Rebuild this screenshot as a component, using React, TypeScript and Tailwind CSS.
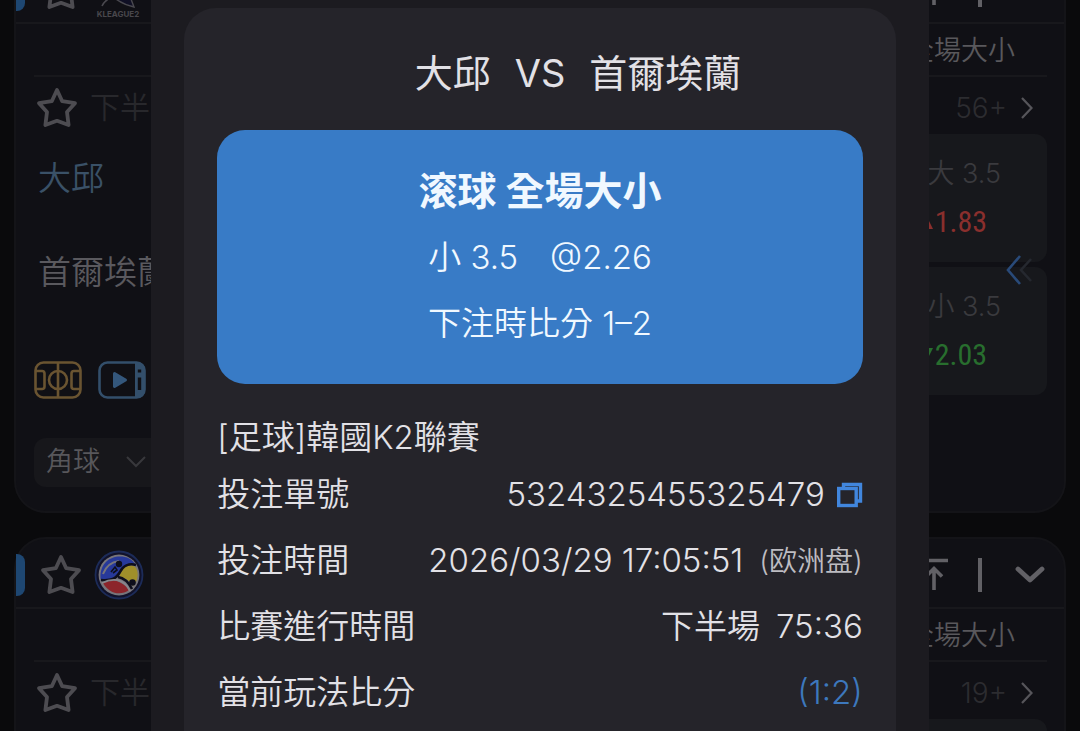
import React from "react";

function Star() {
  return (
    <svg width="42" height="42" viewBox="0 0 42 42" fill="none" stroke="currentColor" strokeWidth="3.8" strokeLinejoin="round">
      <path d="M21 3 L26.2 14.200 L39 16.200 L31 25 L32.6 38 L21 33.800 L9.400 38 L11 25 L3 16.200 L15.800 14.200 Z" />
    </svg>
  );
}

function StarButton({ label }: { label: string }) {
  return (
    <button type="button" aria-label={label} className="shrink-0 text-[#4d4c51]">
      <Star />
    </button>
  );
}

function KLeagueLogo() {
  return (
    <svg width="48" height="60" viewBox="0 0 48 60" fill="none">
      <path d="M14 30 L26 10 L40 47 C31 45 22 40 16 34 Z" stroke="#4a494f" strokeWidth="1.4" fill="#0f0f24" />
      <path d="M8 46 C11 40 16 37 23 36" stroke="#4a494f" strokeWidth="1.6" />
      <text x="24" y="57" textAnchor="middle" fontSize="8" fontWeight="700" fill="#48474c" fontFamily="Inter, sans-serif">
        KLEAGUE2
      </text>
    </svg>
  );
}

function HandballLogo() {
  return (
    <svg width="50" height="50" viewBox="0 0 50 50" fill="none">
      <circle cx="25" cy="25" r="23.5" fill="#11122a" stroke="#1c2b58" strokeWidth="1.8" />
      <circle cx="25" cy="25" r="20.4" fill="#77757b" />
      <path d="M6.500 28 C6 14 15 6.500 26 6.500 C33 6.500 38 9 41 14 C34 14 29 16 26 21 C21 29 13 31 7 30 Z" fill="#27399a" />
      <path d="M9 24 C12 16 17 12 25 11" stroke="#77757b" strokeWidth="2" />
      <path d="M26 22 C30 15 38 13 42 18 C45 23 44 31 39 36 C36 31 32 28 26 27 Z" fill="#a08f2a" />
      <path d="M9 33 C17 29 26 29 35 40 C27 46 15 44 9 33 Z" fill="#8c252b" />
      <path d="M7 30 C17 31 22 29 26 22 C29 16 35 13 42 15 M24 27 C31 28 35 33 38 39" stroke="#0e0e1c" strokeWidth="2.600" />
      <path d="M8 33 C16 29 26 28 33 36 L36 41" stroke="#88868c" strokeWidth="1.800" />
      <circle cx="25" cy="14" r="3.200" fill="#0e0e1c" />
      <path d="M17 22 L21 17 L23 20 L19 23" stroke="#0e0e1c" strokeWidth="1.600" />
      <circle cx="38.500" cy="32.500" r="3.300" fill="#0e0e1c" />
    </svg>
  );
}

function PitchIcon() {
  return (
    <svg width="48" height="38" viewBox="0 0 48 38" fill="none" stroke="#6a5431" strokeWidth="2.600">
      <rect x="1.500" y="1.500" width="45" height="35" rx="8" />
      <path d="M24 1.500 V36.500" />
      <circle cx="24" cy="19" r="9" />
      <path d="M2 10 H8 Q10.500 10 10.500 12.500 V25.500 Q10.500 28 8 28 H2 M46 10 H40 Q37.500 10 37.500 12.500 V25.500 Q37.500 28 40 28 H46" />
    </svg>
  );
}

function VideoIcon() {
  return (
    <svg width="48" height="38" viewBox="0 0 48 38" fill="none">
      <rect x="1.500" y="1.500" width="45" height="35" rx="8" stroke="#334f6b" strokeWidth="2.600" />
      <path d="M37 1 H40 Q47 2 47 9 V29 Q47 36 40 37 H37 Z" fill="#334f6b" />
      <path d="M41.500 8.500 V11.500 M41.500 16.500 V29" stroke="#101015" strokeWidth="3.400" />
      <path d="M16.500 12.500 L27.500 19 L16.500 25.500 Z" fill="#34577c" stroke="#34577c" strokeWidth="3" strokeLinejoin="round" />
    </svg>
  );
}

function ChevronRight() {
  return (
    <svg width="12" height="22" viewBox="0 0 12 22" fill="none" stroke="#56555a" strokeWidth="2.200">
      <path d="M1 1 L10.500 11 L1 21" />
    </svg>
  );
}

function CardHeader({ logo }: { logo: React.ReactNode }) {
  return (
    <header className="flex h-[70px] items-center justify-between border-b-2 border-[#18181c] pr-[18px] pt-1">
      <div className="flex items-center">
        <span className="h-[42px] w-[9px] rounded-r-lg bg-[#1e4772]" />
        <span className="ml-[15px] flex">
          <StarButton label="收藏聯賽" />
        </span>
        <span className="ml-3">{logo}</span>
      </div>
      <div className="flex items-center text-[#626166]">
        <button type="button" aria-label="置頂">
          <svg width="32" height="34" viewBox="0 0 32 34" fill="none" stroke="currentColor" strokeWidth="3.600">
            <path d="M2 2.500 H30 M16 32 V11 M8 18.500 L16 10.500 L24 18.500" />
          </svg>
        </button>
        <span className="ml-7 h-[34px] w-1 bg-current" />
        <button type="button" aria-label="收合" className="ml-8">
          <svg width="32" height="20" viewBox="0 0 32 20" fill="none" stroke="currentColor" strokeWidth="4.800" strokeLinecap="round" strokeLinejoin="round">
            <path d="M4 4 L16 15 L28 4" />
          </svg>
        </button>
      </div>
    </header>
  );
}

type Odd = { side: string; price: string; up: boolean };

function OddCell({ side, price, up }: Odd) {
  return (
    <button
      type="button"
      className="flex h-32 w-60 flex-col items-end justify-center gap-2 rounded-xl bg-[#17181c] pr-[46px] text-[#3a3a3e]"
    >
      <span className="text-[27px] leading-10">{side} 3.5</span>
      <span
        className={
          up
            ? "mr-[14px] flex items-center gap-0.5 font-['Roboto_Condensed','Liberation_Sans_Narrow','Roboto',sans-serif] text-[30px] font-normal leading-10 text-[#8a2f2d]"
            : "mr-[14px] flex items-center gap-0.5 font-['Roboto_Condensed','Liberation_Sans_Narrow','Roboto',sans-serif] text-[30px] font-normal leading-10 text-[#286e2e]"
        }
      >
        <svg width="14" height="14" viewBox="0 0 14 14" fill="currentColor">
          <path d={up ? "M7 0 L14 14 H0 Z" : "M0 0 H14 L7 14 Z"} />
        </svg>
        {price}
      </span>
    </button>
  );
}

function MatchCard({ logo, count, odds }: { logo: React.ReactNode; count: string; odds: Odd[] }) {
  return (
    <article className="rounded-[32px] border-2 border-[#141418] bg-[#101015]">
      <CardHeader logo={logo} />
      <div className="pb-6 pl-[18px] pr-[17px]">
        <div className="flex h-[53px] items-center justify-end border-b-2 border-[#18181c] pr-8 pt-1 text-[27px] text-[#59585c]">
          全場大小
        </div>
        <div className="flex h-[57px] items-center justify-between">
          <div className="flex items-center gap-3 pl-0.5 pt-1 text-[30px] text-[#28282c]">
            <StarButton label="收藏賽事" />
            <span>下半場</span>
          </div>
          <button type="button" className="flex items-center gap-[14px] pr-[14px] pt-1 text-[28px] text-[#2c2c30]">
            {count}
            <ChevronRight />
          </button>
        </div>
        <div className="flex justify-between">
          <div className="flex flex-col">
            <p className="pl-1 pt-5 text-[33px] leading-[48px] text-[#3a5167]">大邱</p>
            <p className="mt-[46px] pl-1 text-[33px] leading-[48px] text-[#5a595e]">首爾埃蘭</p>
            <div className="mt-[65px] flex gap-4">
              <button type="button" aria-label="賽況"><PitchIcon /></button>
              <button type="button" aria-label="影片"><VideoIcon /></button>
            </div>
            <label className="relative mt-[39px] block h-[49px] w-[140px]">
              <span className="sr-only">玩法</span>
              <select className="h-full w-full appearance-none rounded-xl bg-[#17171b] pl-3 text-[27px] text-[#58575b]">
                <option>角球</option>
              </select>
              <svg className="absolute right-7 top-[18px]" width="20" height="12" viewBox="0 0 20 12" fill="none" stroke="#38383c" strokeWidth="2">
                <path d="M1 1 L10 10 L19 1" />
              </svg>
            </label>
          </div>
          <div className="relative flex flex-col gap-[5px] self-start">
            {odds.map((o) => (
              <OddCell key={o.side} {...o} />
            ))}
            <svg className="absolute right-[14px] top-[121px]" width="27" height="30" viewBox="0 0 27 30" fill="none" strokeWidth="2.600">
              <path d="M14 1 L2 15 L14 29" stroke="#294a79" />
              <path d="M25 4 L15 15 L25 26" stroke="#25282f" />
            </svg>
          </div>
        </div>
      </div>
    </article>
  );
}

function CopyIcon() {
  return (
    <svg width="26" height="26" viewBox="0 0 26 26" fill="none" stroke="#4186dd" strokeWidth="3.400">
      <rect x="1.700" y="6.500" width="17.500" height="17" />
      <path d="M6.500 6 V2.500 H23.500 V19 H20" />
    </svg>
  );
}

function Row({ label, children }: { label: string; children: React.ReactNode }) {
  return (
    <div className="flex h-[66px] items-center justify-between">
      <dt>{label}</dt>
      <dd className="flex items-center">{children}</dd>
    </div>
  );
}

function BetDialog() {
  return (
    <section role="dialog" aria-label="注單詳情" className="min-h-full w-[72%] bg-[#1c1b20] px-[33px] pt-2">
      <div className="min-h-screen whitespace-nowrap rounded-t-[32px] bg-[#25242a] px-[33px] text-[33px] text-[#e2e1e6]">
        <h1 className="flex h-[122px] items-center justify-center gap-6 pl-[76px] pt-2 text-[38px] font-normal">
          <span>大邱</span>
          <span>VS</span>
          <span>首爾埃蘭</span>
        </h1>
        <div className="flex h-[254px] flex-col items-center rounded-[28px] bg-[#387bc6] pt-7 text-[#f0f8ff]">
          <h2 className="text-[39px] font-bold leading-[66px]">
            滚球 全場大小
          </h2>
          <p className="flex gap-8 leading-[66px]">
            <span>小 3.5</span>
            <span>@2.26</span>
          </p>
          <p className="leading-[66px]">下注時比分 1–2</p>
        </div>
        <p className="mt-7 leading-[50px]">[足球]韓國K2聯賽</p>
        <dl>
          <Row label="投注單號">
            <span>5324325455325479</span>
            <button type="button" aria-label="複製單號" className="ml-3">
              <CopyIcon />
            </button>
          </Row>
          <Row label="投注時間">
            <span>2026/03/29 17:05:51</span>
            <span className="ml-4 text-[28px] text-[#bdbcc1]">(欧洲盘)</span>
          </Row>
          <Row label="比賽進行時間">
            <span>下半場</span>
            <span className="ml-4">75:36</span>
          </Row>
          <Row label="當前玩法比分">
            <span className="text-[#3d78bd]">(1:2)</span>
          </Row>
        </dl>
      </div>
    </section>
  );
}

export default function App() {
  return (
    <div className="relative h-screen overflow-hidden bg-[#0a0a0c] font-['Inter','Noto_Sans_CJK_TC',sans-serif] font-[350]">
      <main className="-mt-12 flex flex-col gap-6 px-[14px]">
        <MatchCard
          logo={<KLeagueLogo />}
          count="56+"
          odds={[
            { side: "大", price: "1.83", up: true },
            { side: "小", price: "2.03", up: false },
          ]}
        />
        <MatchCard
          logo={<HandballLogo />}
          count="19+"
          odds={[
            { side: "大", price: "2.50", up: true },
            { side: "小", price: "2.75", up: false },
          ]}
        />
      </main>
      <div className="absolute inset-0 flex justify-center overflow-hidden">
        <BetDialog />
      </div>
    </div>
  );
}
